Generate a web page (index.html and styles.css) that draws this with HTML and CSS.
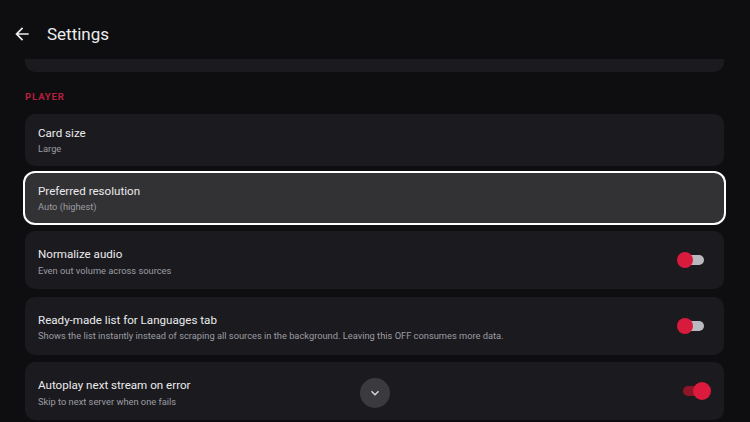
FILE: index.html
```html
<!DOCTYPE html>
<html>
<head>
<meta charset="utf-8">
<link rel="stylesheet" href="styles.css">
</head>
<body>
<div class="screen">
  <header class="topbar">
    <svg class="back" viewBox="0 0 24 24" width="20" height="20"><path fill="#ececee" d="M20 11H7.83l5.59-5.59L12 4l-8 8 8 8 1.41-1.41L7.83 13H20v-2z"/></svg>
    <h1 class="title">Settings</h1>
  </header>
  <main class="list">
    <div class="card-tail"></div>
    <div class="section">PLAYER</div>
    <div class="card">
      <div class="text">
        <div class="name">Card size</div>
        <div class="desc">Large</div>
      </div>
    </div>
    <div class="card focused">
      <div class="text">
        <div class="name">Preferred resolution</div>
        <div class="desc">Auto (highest)</div>
      </div>
    </div>
    <div class="card tall">
      <div class="text">
        <div class="name">Normalize audio</div>
        <div class="desc">Even out volume across sources</div>
      </div>
      <div class="toggle"><span class="track"></span><span class="thumb"></span></div>
    </div>
    <div class="card tall">
      <div class="text">
        <div class="name">Ready-made list for Languages tab</div>
        <div class="desc">Shows the list instantly instead of scraping all sources in the background. Leaving this OFF consumes more data.</div>
      </div>
      <div class="toggle"><span class="track"></span><span class="thumb"></span></div>
    </div>
    <div class="card tall">
      <div class="text">
        <div class="name">Autoplay next stream on error</div>
        <div class="desc">Skip to next server when one fails</div>
      </div>
      <div class="toggle on"><span class="track"></span><span class="thumb"></span></div>
    </div>
  </main>
  <button class="scroll-down"><svg viewBox="0 0 24 24" width="16" height="16"><path fill="#dcdce0" d="M16.59 8.59L12 13.17 7.41 8.59 6 10l6 6 6-6z"/></svg></button>
</div>
</body>
</html>
```
FILE: styles.css
```css
* { box-sizing: border-box; }
html, body { margin: 0; padding: 0; }
body {
  background: #0e0e11;
  font-family: Roboto, "Noto Sans", sans-serif;
  color: #e8e8ea;
  width: 750px;
  height: 422px;
  overflow: hidden;
}
.screen { position: relative; width: 750px; height: 422px; overflow: hidden; }
.topbar {
  display: flex;
  align-items: center;
  height: 59px;
  padding: 24px 0 15px 12px;
}
.back { display: block; }
.title {
  margin: 0 0 0 15px;
  font-size: 17px;
  line-height: 20px;
  font-weight: 400;
  color: #ececee;
}
.list {
  padding: 0 26px 0 25px;
  display: flex;
  flex-direction: column;
}
.card-tail {
  height: 13px;
  background: #1b1b1f;
  border-radius: 0 0 10px 10px;
}
.section {
  margin: 18px 0 0 0;
  height: 24px;
  font-size: 9.5px;
  font-weight: 700;
  letter-spacing: 0.9px;
  color: #b81e3c;
  line-height: 14px;
}
.card {
  display: flex;
  align-items: center;
  background: #1b1b1f;
  border-radius: 10px;
  padding: 0 17px 0 13px;
  margin-bottom: 7px;
  height: 52px;
  flex: none;
}
.card.focused {
  background: #323235;
  box-shadow: 0 0 0 2px #ffffff;
  height: 50px;
  margin-bottom: 8px;
}
.card.tall { height: 58px; margin-bottom: 7.5px; }
.card.tall .text { align-self: flex-start; padding-top: 15px; }
.text { flex: 1; min-width: 0; }
.name { font-size: 11.6px; line-height: 16px; color: #ebebed; }
.desc { font-size: 9.3px; line-height: 13px; color: #9c9ca2; margin-top: 1.5px; }
.toggle { position: relative; width: 30px; height: 18px; flex: none; }
.track {
  position: absolute;
  left: 3px; top: 4px;
  width: 24px; height: 10px;
  border-radius: 5px;
  background: #b9b9c0;
}
.thumb {
  position: absolute;
  left: 0; top: 1px;
  width: 16px; height: 16px;
  border-radius: 50%;
  background: #d81a3c;
}
.toggle.on .track { background: #8e1628; left: 6px; width: 22px; }
.toggle.on .thumb { left: 16px; top: 0; width: 18px; height: 18px; background: #dc1a3d; }
.scroll-down {
  position: absolute;
  left: 360px;
  top: 378px;
  width: 30px; height: 30px;
  border: none;
  border-radius: 50%;
  background: #3a3a3f;
  display: flex;
  align-items: center;
  justify-content: center;
  padding: 0;
}
.scroll-down svg { display: block; }
```
